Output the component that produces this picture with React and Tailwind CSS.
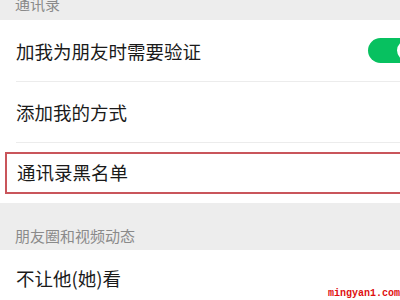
export default function App() {
  const font = { fontFamily: "'Noto Sans CJK SC', 'Noto Sans', sans-serif" };
  return (
    <div className="relative w-[400px] h-[300px] overflow-hidden bg-[#ededed]" style={font}>
      {/* section label, cut off at top */}
      <div className="h-[20px] overflow-hidden pl-[15px]">
        <div className="-mt-[4px] text-[15px] leading-[16px] text-[#8a8a8a]">通讯录</div>
      </div>

      {/* row with switch */}
      <div className="h-[61px] bg-white flex items-center justify-between pl-[16px]">
        <span className="text-[18.5px] text-[#1a1a1a] pt-[2px]">加我为朋友时需要验证</span>
        <div className="w-[52px] h-[25px] -mr-[20px] rounded-full bg-[#07c160] flex items-center justify-end pr-[2px]">
          <div className="w-[21px] h-[21px] rounded-full bg-white" />
        </div>
      </div>

      <div className="bg-white pl-[16px]">
        <div className="h-px bg-[#ececec]" />
      </div>

      <div className="h-[60px] bg-white flex items-center pl-[16px]">
        <span className="text-[18.5px] text-[#1a1a1a] pt-[2px]">添加我的方式</span>
      </div>

      <div className="bg-white pl-[16px]">
        <div className="h-px bg-[#ececec]" />
      </div>

      {/* highlighted row */}
      <div className="h-[60px] bg-white pt-[9px] pl-[5px]">
        <div className="h-[42px] -mr-[10px] border-2 border-[#c9555b] flex items-center pl-[10px]">
          <span className="text-[18.5px] text-[#1a1a1a]">通讯录黑名单</span>
        </div>
      </div>

      {/* second section label */}
      <div className="h-[47px] flex items-end pl-[15px] pb-[6px]">
        <span className="text-[15px] leading-[16px] text-[#8a8a8a]">朋友圈和视频动态</span>
      </div>

      <div className="h-[60px] bg-white flex items-center pl-[16px]">
        <span className="text-[18.5px] text-[#1a1a1a] -mt-[2px]">不让他(她)看</span>
      </div>

      {/* watermark */}
      <div
        className="absolute right-0 bottom-[1px] text-[10px] leading-[10px] font-bold text-[#e01010]"
        style={{ fontFamily: "'Liberation Mono', monospace" }}
      >
        mingyan1.com
      </div>
    </div>
  );
}
